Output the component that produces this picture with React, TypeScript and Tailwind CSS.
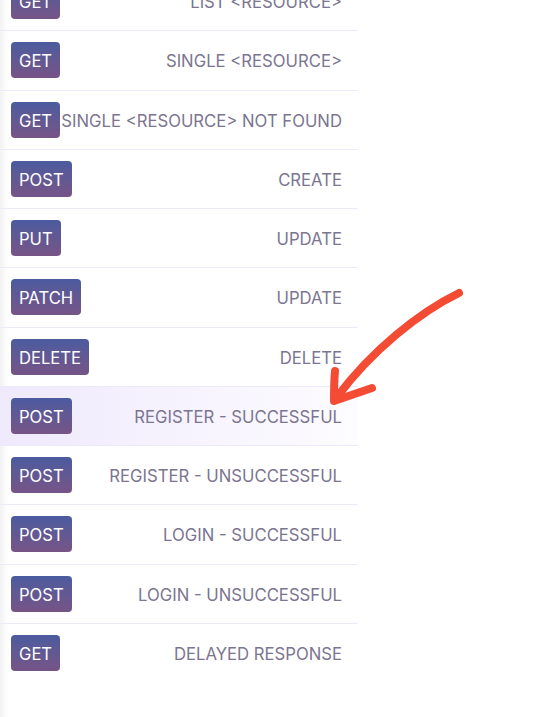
import React from "react";

const rows: { m: string; t: string; active?: boolean }[] = [
  { m: "GET", t: "LIST <RESOURCE>" },
  { m: "GET", t: "SINGLE <RESOURCE>" },
  { m: "GET", t: "SINGLE <RESOURCE> NOT FOUND" },
  { m: "POST", t: "CREATE" },
  { m: "PUT", t: "UPDATE" },
  { m: "PATCH", t: "UPDATE" },
  { m: "DELETE", t: "DELETE" },
  { m: "POST", t: "REGISTER - SUCCESSFUL", active: true },
  { m: "POST", t: "REGISTER - UNSUCCESSFUL" },
  { m: "POST", t: "LOGIN - SUCCESSFUL" },
  { m: "POST", t: "LOGIN - UNSUCCESSFUL" },
  { m: "GET", t: "DELAYED RESPONSE" },
];

export default function App() {
  return (
    <div
      className="relative w-[543px] h-[717px] overflow-hidden bg-white"
      style={{ fontFamily: "Inter, 'Noto Sans', sans-serif" }}
    >
      <div className="w-[358px] h-[780px] -mt-[30px] pt-[2px] shadow-[inset_10px_0_8px_-8px_rgba(0,0,0,0.08)]">
        <div>
          {rows.map((r, i) => (
            <div
              key={i}
              className={
                "flex items-center justify-between h-[59.25px] pl-[11px] pr-[16px] border-[#ece9f8] " +
                (i < rows.length - 1 ? "border-b " : "") +
                (r.active ? "bg-gradient-to-r from-[#efe9fc] to-[#fdfcff]" : "")
              }
            >
              <span className="shrink-0 rounded-[4px] bg-gradient-to-b from-[#4a5b9f] to-[#765486] text-white text-[16.6px] leading-[38px] h-[36px] px-[8px]">
                {r.m}
              </span>
              <span className="whitespace-nowrap text-[16.7px] pt-[3px] text-[#7b7590]">{r.t}</span>
            </div>
          ))}
        </div>
      </div>
      <svg
        className="absolute left-0 top-0 pointer-events-none"
        width="543"
        height="717"
        viewBox="0 0 543 717"
      >
        <g fill="none" stroke="#f44b35" strokeWidth="8" strokeLinecap="round" strokeLinejoin="round">
          <path d="M459 293 C 420 312, 372 350, 337 397" />
          <path d="M335 371 C 334 382, 334 392, 334 401 L 372 388" />
        </g>
      </svg>
    </div>
  );
}
